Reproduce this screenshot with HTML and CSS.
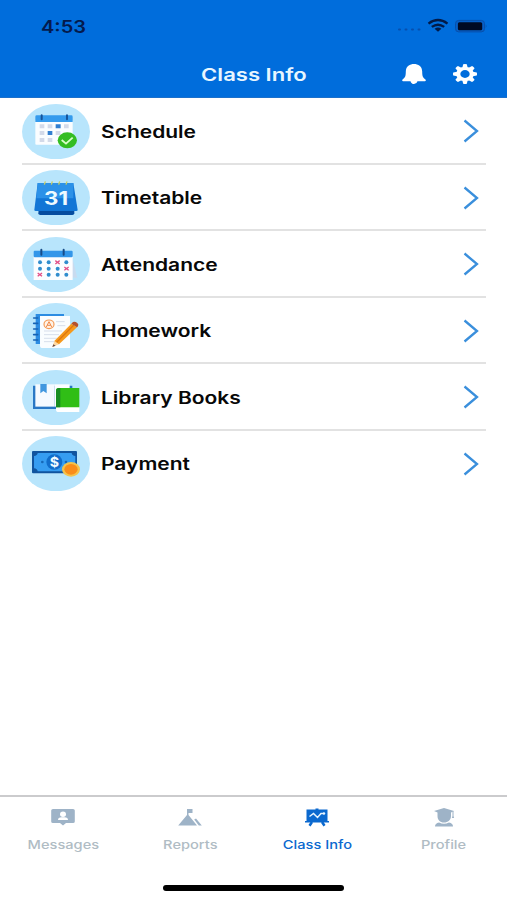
FILE: index.html
```html
<!DOCTYPE html>
<html lang="en">
<head>
    <meta charset="UTF-8">
    <meta name="viewport" content="width=device-width, initial-scale=1.0">
    <title>Class Info</title>
    <link rel="stylesheet" href="styles.css">
</head>
<body>
    <div class="app">
        <header class="header">
            <div class="status-bar">
                <span class="time"><span class="wide">4:53</span></span>
                <svg class="status-icons" width="90" height="16" viewBox="0 0 90 16">
                    <g fill="#064fae">
                        <rect x="0" y="10.5" width="3" height="2" rx="1"/>
                        <rect x="6.5" y="10.5" width="3" height="2" rx="1"/>
                        <rect x="13" y="10.5" width="3" height="2" rx="1"/>
                        <rect x="19.5" y="10.5" width="3" height="2" rx="1"/>
                    </g>
                    <g fill="none" stroke="#021a48" stroke-width="2.4">
                        <path d="M30.5 5.6Q40 -1.4 49.5 5.6"/>
                        <path d="M33.8 8.9Q40 4.400 46.200 8.900"/>
                    </g>
                    <path d="M36.600 10.700Q40 8.200 43.400 10.700L40 13.700Z" fill="#021a48"/>
                    <rect x="57.500" y="2.400" width="29" height="11.500" rx="3.200" fill="#0660c8" stroke="#0750ac"/>
                    <rect x="59.900" y="4.200" width="24.300" height="8" rx="1.500" fill="#000a24"/>
                    <path d="M87.800 6.200Q89.200 8.200 87.800 10.200Z" fill="#064798"/>
                </svg>
            </div>
            <div class="title-bar">
                <h1><span class="wide">Class Info</span></h1>
                <div class="actions">
                    <svg width="26" height="22" viewBox="0 0 26 22" fill="#fff">
                        <path d="M13 1C9 1 4.800 3.200 4.800 8.500C4.800 13 4.300 14.500 1.500 16.500Q0.500 18.200 2 18.200H9.500Q10.300 21 13 21Q15.700 21 16.500 18.200H24Q25.500 18.200 24.500 16.500C21.700 14.500 21.200 13 21.200 8.500C21.200 3.200 17 1 13 1Z"/>
                    </svg>
                    <svg width="26" height="22" viewBox="-13 -11 26 22">
                        <g transform="scale(1.2 1)">
                            <circle r="5.600" fill="none" stroke="#fff" stroke-width="3.400"/>
                            <g fill="#fff">
                                <path id="tooth" d="M-2.200 -6.500L-1.500 -9.800Q0 -10.300 1.500 -9.800L2.200 -6.500Z"/>
                                <use href="#tooth" transform="rotate(45)"/>
                                <use href="#tooth" transform="rotate(90)"/>
                                <use href="#tooth" transform="rotate(135)"/>
                                <use href="#tooth" transform="rotate(180)"/>
                                <use href="#tooth" transform="rotate(225)"/>
                                <use href="#tooth" transform="rotate(270)"/>
                                <use href="#tooth" transform="rotate(315)"/>
                            </g>
                        </g>
                    </svg>
                </div>
            </div>
        </header>

        <main class="menu">
            <a class="menu-item">
                <svg class="menu-icon" viewBox="0 0 204 166">
                    <ellipse class="disc" cx="102" cy="83" rx="102" ry="83"/>
                    <rect x="40" y="48" width="112" height="74" rx="3" fill="#fafdff"/>
                    <path d="M40 54V38Q40 34 44 34H148Q152 34 152 38V54Z" fill="#359bed"/>
                    <path d="M59 34V46M135 34V46" stroke="#17549a" stroke-width="6" stroke-linecap="round"/>
                    <path d="M53 61h14v12h-14zM77 61h14v12h-14zM126 61h14v12h-14zM53 81h14v12h-14zM101 81h14v12h-14zM53 102h14v12h-14zM77 102h14v12h-14z" fill="#d3dae9"/>
                    <path d="M101 61h15v12h-15zM77 81h14v12h-14z" fill="#327fd0"/>
                    <ellipse cx="136" cy="109" rx="29" ry="24" fill="#34bd22"/>
                    <path d="M119 108L132 119L152 101" fill="none" stroke="#d9ffca" stroke-width="5.500"/>
                </svg>
                <span class="label"><span class="wide">Schedule</span></span>
                <svg class="chevron" viewBox="0 0 16 24"><path d="M1.500 1.500L14 12L1.500 22.500"/></svg>
            </a>
            <a class="menu-item">
                <svg class="menu-icon" viewBox="0 0 204 166">
                    <ellipse class="disc" cx="102" cy="83" rx="102" ry="83"/>
                    <path d="M50 118H157V130Q157 135 151 135H55Q49 135 49 130Z" fill="#064c9f"/>
                    <path d="M47 39H154L167 120Q167 123 163 123H41Q37 123 37 120Z" fill="#1276d6"/>
                    <path d="M47 39H154V85H43Z" fill="#2b91e8"/>
                    <path d="M67 44L70 34M88 44L91 34M110 44L113 34M132 44L135 34" stroke="#c9cd62" stroke-width="4"/>
                    <text class="date" x="102" y="105" textLength="72" lengthAdjust="spacingAndGlyphs">31</text>
                </svg>
                <span class="label"><span class="wide">Timetable</span></span>
                <svg class="chevron" viewBox="0 0 16 24"><path d="M1.500 1.500L14 12L1.500 22.500"/></svg>
            </a>
            <a class="menu-item">
                <svg class="menu-icon" viewBox="0 0 204 166">
                    <ellipse class="disc" cx="102" cy="83" rx="102" ry="83"/>
                    <path d="M152 65L166 122H145Z" fill="#c8dbef"/>
                    <path d="M35 58H152V129H35Z" fill="#fcfdff"/>
                    <rect x="35" y="41" width="117" height="20" rx="3" fill="#3396e9"/>
                    <path d="M58 38V53M125 38V53" stroke="#184b88" stroke-width="6" stroke-linecap="round"/>
                    <g fill="#318dce">
                        <circle cx="54" cy="76" r="6"/><circle cx="80" cy="76" r="6"/><circle cx="133" cy="76" r="6"/>
                        <circle cx="54" cy="95" r="6"/><circle cx="80" cy="95" r="6"/><circle cx="107" cy="95" r="6"/>
                        <circle cx="80" cy="113" r="6"/><circle cx="107" cy="113" r="6"/><circle cx="133" cy="113" r="6"/>
                    </g>
                    <path d="M100 71l13 10m0-10l-13 10M127 90l13 10m0-10l-13 10M47 108l13 10m0-10l-13 10" stroke="#e34f88" stroke-width="4"/>
                </svg>
                <span class="label"><span class="wide">Attendance</span></span>
                <svg class="chevron" viewBox="0 0 16 24"><path d="M1.500 1.500L14 12L1.500 22.500"/></svg>
            </a>
            <a class="menu-item">
                <svg class="menu-icon" viewBox="0 0 204 166">
                    <ellipse class="disc" cx="102" cy="83" rx="102" ry="83"/>
                    <path d="M41 33H126V123H41Z" fill="#2c8ce2"/>
                    <path d="M35 45h12M35 61h12M35 78h12M35 95h12M35 111h12" stroke="#1763b4" stroke-width="5" stroke-linecap="round"/>
                    <path d="M54 39H144V135H62Q54 135 54 128Z" fill="#fafdff"/>
                    <path d="M102 56H128M106 68H130M66 84H120M66 95H111M66 106H105M66 116H99" stroke="#d7dfeb" stroke-width="3"/>
                    <ellipse cx="81" cy="64" rx="15" ry="13" fill="#fff3e7" stroke="#f49a55" stroke-width="3.500"/>
                    <path d="M73 72L81 56L89 72M76 67H86" fill="none" stroke="#ee8846" stroke-width="3"/>
                    <path d="M91 132L97 114L111 124Z" fill="#ffd8a0"/>
                    <path d="M91 132L94 124L101 128Z" fill="#684a44"/>
                    <path d="M97 114L148 62L165 73L111 124Z" fill="#f6991c"/>
                    <path d="M104 118L155 67" stroke="#df770f" stroke-width="4"/>
                    <path d="M148 62L153 57Q159 54 166 60Q171 64 168 70L165 73Z" fill="#b5522d"/>
                </svg>
                <span class="label"><span class="wide">Homework</span></span>
                <svg class="chevron" viewBox="0 0 16 24"><path d="M1.500 1.500L14 12L1.500 22.500"/></svg>
            </a>
            <a class="menu-item">
                <svg class="menu-icon" viewBox="0 0 204 166">
                    <ellipse class="disc" cx="102" cy="83" rx="102" ry="83"/>
                    <path d="M33 47H151V117H33Z" fill="#2877c5"/>
                    <path d="M40 43H97V110H40Z" fill="#f5faff"/>
                    <path d="M97 43H143V110H97Z" fill="#fdfeff"/>
                    <path d="M55 42H74V70L64 63L55 70Z" fill="#4197df"/>
                    <path d="M102 108H172V126H110Q102 126 102 119Z" fill="#fff"/>
                    <path d="M102 62Q102 54 110 54H172V112H102Z" fill="#30be16"/>
                    <path d="M102 62Q102 54 110 54H115V112H102Z" fill="#188d22"/>
                </svg>
                <span class="label"><span class="wide">Library Books</span></span>
                <svg class="chevron" viewBox="0 0 16 24"><path d="M1.500 1.500L14 12L1.500 22.500"/></svg>
            </a>
            <a class="menu-item">
                <svg class="menu-icon" viewBox="0 0 204 166">
                    <ellipse class="disc" cx="102" cy="83" rx="102" ry="83"/>
                    <rect x="30" y="45" width="135" height="67" rx="3" fill="#10549f"/>
                    <path d="M47 51H149Q150 59 160 60V97Q149 98 148 106H47Q46 98 36 97V60Q46 59 47 51Z" fill="#369df1"/>
                    <ellipse cx="97" cy="78" rx="24" ry="23" fill="#116dca"/>
                    <circle cx="61" cy="78" r="4" fill="#1668b8"/>
                    <circle cx="132" cy="78" r="4" fill="#1668b8"/>
                    <text class="dollar" x="97" y="92" textLength="28" lengthAdjust="spacingAndGlyphs">$</text>
                    <ellipse cx="147" cy="100" rx="27" ry="22" fill="#f5c34b"/>
                    <ellipse cx="147" cy="100" rx="20" ry="16" fill="#fa8d1a"/>
                </svg>
                <span class="label"><span class="wide">Payment</span></span>
                <svg class="chevron" viewBox="0 0 16 24"><path d="M1.500 1.500L14 12L1.500 22.500"/></svg>
            </a>
        </main>

        <nav class="tabs">
            <a class="tab">
                <svg width="26" height="20" viewBox="0 0 26 20">
                    <path d="M3 2H23Q24.800 2 24.800 3.500V14.500Q24.800 16 23 16H16L13 18.500L10 16H3Q1.200 16 1.200 14.500V3.500Q1.200 2 3 2Z" fill="currentColor"/>
                    <ellipse cx="13" cy="7.300" rx="3" ry="2.700" fill="#fff"/>
                    <path d="M8 13Q8 10.300 11.500 10.200H14.500Q18 10.300 18 13Z" fill="#fff"/>
                </svg>
                <span class="wide">Messages</span>
            </a>
            <a class="tab">
                <svg width="26" height="20" viewBox="0 0 26 20" fill="currentColor">
                    <path d="M10 2H15.500V6H11.500V8L20 18.500H1.200L10 8Z"/>
                    <path d="M17.200 12.500L19 11.500L24.800 18.500H21.800Z"/>
                </svg>
                <span class="wide">Reports</span>
            </a>
            <a class="tab active">
                <svg width="26" height="20" viewBox="0 0 26 20">
                    <path d="M2.500 2.500H11.500V1.500H14.500V2.500H23.500V14H25V15.500H1V14H2.500Z" fill="currentColor"/>
                    <path d="M8 15L5.500 18.800M18 15L20.500 18.800" stroke="currentColor" stroke-width="2.500"/>
                    <path d="M5.500 9.500L9.500 6.500L13.500 10.500L17 6.500H20" fill="none" stroke="#e8f5ff" stroke-width="1.500"/>
                    <circle cx="20" cy="6.500" r="1.200" fill="#e8f5ff"/>
                </svg>
                <span class="wide">Class Info</span>
            </a>
            <a class="tab">
                <svg width="26" height="20" viewBox="0 0 26 20" fill="currentColor">
                    <path d="M3 4L13 1L23 4L20 5.500V9C20 13 17 15.500 13 15.500C9 15.500 6.500 13 6.500 9V5.500Z"/>
                    <path d="M22 4V11" stroke="currentColor"/>
                    <path d="M20.800 11L22 9L23.200 11Z"/>
                    <path d="M4 19.500Q4 16.300 8 15.500Q13 18 18 15.500Q22 16.300 22 19.500Z"/>
                </svg>
                <span class="wide">Profile</span>
            </a>
        </nav>
        <div class="home-indicator"></div>
    </div>
</body>
</html>
```

FILE: styles.css
```css
* {
    margin: 0;
    padding: 0;
    box-sizing: border-box;
}

body {
    font-family: Inter, 'Liberation Sans', sans-serif;
    background-color: #ffffff;
    color: #080808;
}

.app {
    display: flex;
    flex-direction: column;
    height: 900px;
    overflow: hidden;
}

/* text is set wider than the font's normal proportions */
.wide {
    display: inline-block;
    white-space: nowrap;
    transform: scaleX(1.22);
}

.header {
    height: 98px;
    background-color: #006ddc;
    border-bottom: 1px solid #1c70cb;
}

.status-bar {
    display: flex;
    justify-content: space-between;
    align-items: center;
    height: 52px;
    padding: 0 19px 0 41px;
}

.time {
    padding-top: 1px;
    font-size: 17px;
    font-weight: 600;
    color: #041a4c;
}

.time .wide {
    transform: scaleX(1.18);
    transform-origin: left;
}

.title-bar {
    display: grid;
    grid-template-columns: 1fr auto 1fr;
    align-items: center;
    height: 44px;
    padding-right: 29px;
    padding-left: 30px;
}

h1 {
    grid-column: 2;
    font-size: 17.5px;
    font-weight: 600;
    color: #e8f6ff;
}

h1 .wide {
    transform: scaleX(1.26);
}

.actions {
    display: flex;
    justify-content: flex-end;
    gap: 25px;
}

.menu {
    flex: 1;
    padding: 0 21px 0 22px;
}

.menu-item {
    display: flex;
    align-items: center;
    height: 66.5px;
    padding-top: 2px;
    border-bottom: 2px solid #e2e2e2;
}

.menu-item:last-child {
    padding-top: 0;
    border-bottom: none;
}

.menu-icon {
    width: 68px;
    height: 55.3px;
    margin-right: 11px;
}

.disc {
    fill: #b8e5fc;
}

.date {
    font-size: 55px;
    font-weight: 700;
    fill: #eefaff;
    text-anchor: middle;
}

.dollar {
    font-size: 40px;
    font-weight: 700;
    fill: #f2fbff;
    text-anchor: middle;
}

.label {
    flex: 1;
    padding-top: 1px;
    font-size: 17px;
    font-weight: 600;
}

.label .wide {
    transform: scaleX(1.235);
    transform-origin: left;
}

.chevron {
    width: 16px;
    height: 24px;
    margin-right: 7px;
    fill: none;
    stroke: #3a8fdc;
    stroke-width: 2.3;
}

.tabs {
    display: flex;
    height: 90px;
    padding-top: 10px;
    border-top: 2px solid #cbcbcd;
}

.tab {
    flex: 1;
    display: flex;
    flex-direction: column;
    align-items: center;
    gap: 10px;
    font-size: 12px;
    font-weight: 500;
    line-height: 16px;
    color: #9eb3c7;
}

.tab .wide {
    color: #b0bcc4;
}

.tab.active,
.tab.active .wide {
    color: #0b69cf;
}

.home-indicator {
    width: 181px;
    height: 6px;
    margin: 0 auto 9px;
    border-radius: 3px;
    background-color: #000000;
}
```
